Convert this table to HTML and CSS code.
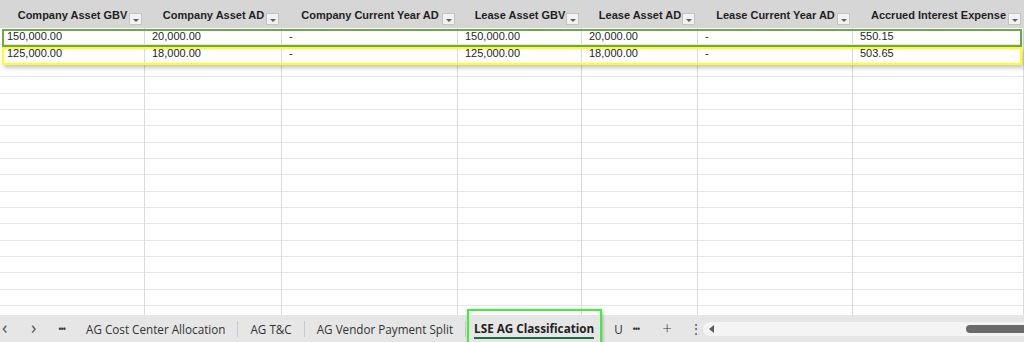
FILE: index.html
```html
<!DOCTYPE html>
<html>
<head>
<meta charset="utf-8">
<link rel="stylesheet" href="styles.css">
</head>
<body>
<div class="sheet">
  <div class="grid head">
    <div class="hcell">Company Asset GBV<span class="filter"></span></div>
    <div class="hcell">Company Asset AD<span class="filter"></span></div>
    <div class="hcell">Company Current Year AD<span class="filter"></span></div>
    <div class="hcell">Lease Asset GBV<span class="filter"></span></div>
    <div class="hcell">Lease Asset AD<span class="filter"></span></div>
    <div class="hcell">Lease Current Year AD<span class="filter"></span></div>
    <div class="hcell">Accrued Interest Expense<span class="filter"></span></div>
  </div>
  <div class="body">
    <div class="grid row">
      <div class="cell">150,000.00</div>
      <div class="cell">20,000.00</div>
      <div class="cell">-</div>
      <div class="cell">150,000.00</div>
      <div class="cell">20,000.00</div>
      <div class="cell">-</div>
      <div class="cell">550.15</div>
    </div>
    <div class="grid row">
      <div class="cell">125,000.00</div>
      <div class="cell">18,000.00</div>
      <div class="cell">-</div>
      <div class="cell">125,000.00</div>
      <div class="cell">18,000.00</div>
      <div class="cell">-</div>
      <div class="cell">503.65</div>
    </div>
    <div class="grid filler">
      <div class="fcell"></div><div class="fcell"></div><div class="fcell"></div><div class="fcell"></div><div class="fcell"></div><div class="fcell"></div><div class="fcell"></div>
    </div>
    <div class="mark mark-green"></div>
    <div class="mark mark-yellow"></div>
  </div>
  <div class="tabbar">
    <span class="nav">&lsaquo;</span>
    <span class="nav">&rsaquo;</span>
    <span class="dots">&bull;&bull;&bull;</span>
    <span class="tab">AG Cost Center Allocation</span>
    <span class="sep"></span>
    <span class="tab">AG T&amp;C</span>
    <span class="sep"></span>
    <span class="tab">AG Vendor Payment Split</span>
    <span class="sep"></span>
    <span class="tab active"><span class="tab-label">LSE AG Classification</span></span>
    <span class="cut">U</span>
    <span class="dots dots2">&bull;&bull;&bull;</span>
    <span class="plus">+</span>
    <span class="vdots">&#8942;</span>
    <div class="scroll">
      <span class="arrow"></span>
      <span class="thumb"></span>
    </div>
  </div>
</div>
</body>
</html>
```

FILE: styles.css
```css
* { box-sizing: border-box; }
html, body { margin: 0; padding: 0; }
body {
  width: 1024px;
  height: 342px;
  overflow: hidden;
  background: #ffffff;
  font-family: "Liberation Sans", Arial, sans-serif;
  color: #262626;
}
.sheet {
  display: flex;
  flex-direction: column;
  height: 342px;
}
.grid {
  display: grid;
  grid-template-columns: 145px 137px 176px 124px 116px 155px 171px;
}
.head {
  height: 28px;
  background: #d6d6d6;
  flex: none;
}
.hcell {
  position: relative;
  display: flex;
  align-items: center;
  justify-content: center;
  padding-top: 2px;
  font-size: 11px;
  font-weight: bold;
  color: #1f1f1f;
  white-space: nowrap;
}
.filter {
  position: absolute;
  right: 3px;
  top: 13px;
  width: 13px;
  height: 12px;
  background: #f2f2f2;
  border: 1px solid #c4c4c4;
}
.filter::after {
  content: "";
  position: absolute;
  left: 3px;
  top: 5px;
  border-left: 3px solid transparent;
  border-right: 3px solid transparent;
  border-top: 3px solid #606060;
}
.body {
  position: relative;
  flex: 1;
  display: flex;
  flex-direction: column;
  overflow: hidden;
}
.row { height: 16.5px; flex: none; }
.cell {
  padding-left: 7px;
  font-size: 11px;
  line-height: 16px;
  border-right: 1px solid #dadada;
  border-bottom: 1px solid #e4e4e4;
  white-space: nowrap;
}
.filler {
  flex: 1;
  background: repeating-linear-gradient(to bottom, #ffffff 0, #ffffff 15.33px, #e6e6e6 15.33px, #e6e6e6 16.33px);
}
.fcell { border-right: 1px solid #dadada; }
.mark {
  position: absolute;
  left: 2px;
  width: 1020px;
  height: 18px;
  border: 2px solid;
}
.mark-green {
  top: 1px;
  border-color: #6fa84a;
  box-shadow: 1px 2px 3px rgba(0,0,0,0.12);
}
.mark-yellow {
  top: 19px;
  border-color: #ffff1a;
  box-shadow: 2px 3px 4px rgba(0,0,0,0.22);
}
.tabbar {
  position: relative;
  height: 27px;
  flex: none;
  background: #e6e6e6;
  display: flex;
  align-items: center;
  font-family: "Open Sans", "Noto Sans", sans-serif;
  font-size: 11.7px;
  color: #333;
  white-space: nowrap;
}
.nav {
  font-size: 18px;
  color: #555;
  width: 29px;
  padding-left: 2px;
  line-height: 1;
  margin-top: -3px;
}
.dots {
  display: inline-block;
  width: 16px;
  font-size: 10px;
  letter-spacing: -1.5px;
  color: #333;
}
.tab { padding: 0 12px; }
.sep {
  width: 1px;
  height: 16px;
  background: #c8c8c8;
}
.active {
  position: relative;
  padding: 0 8px 0 8px;
  font-weight: bold;
  color: #1f1f1f;
}
.active::before {
  content: "";
  position: absolute;
  left: 1px;
  right: 0;
  top: -9px;
  bottom: -9px;
  border: 2px solid #3cf03c;
  box-shadow: 1px 1px 3px rgba(0,0,0,0.25);
}
.tab-label {
  display: inline-block;
  border-bottom: 2px solid #1e6b45;
  padding-bottom: 1px;
  margin-top: 2px;
}
.cut { padding-left: 12px; width: 30px; overflow: hidden; }
.dots2 { width: 30px; }
.plus { width: 28px; font-size: 17px; font-weight: 300; color: #444; margin-top: -2px; }
.vdots { width: 13px; font-size: 12px; color: #444; }
.scroll {
  position: relative;
  flex: 1;
  height: 14px;
  background: #f4f4f4;
  border-radius: 7px 0 0 7px;
}
.arrow {
  position: absolute;
  left: 6px;
  top: 3px;
  border-top: 4px solid transparent;
  border-bottom: 4px solid transparent;
  border-right: 5px solid #5c5c5c;
}
.thumb {
  position: absolute;
  right: 0;
  top: 3px;
  width: 58px;
  height: 8px;
  background: #6a6a6a;
  border-radius: 4px 0 0 4px;
}
```
